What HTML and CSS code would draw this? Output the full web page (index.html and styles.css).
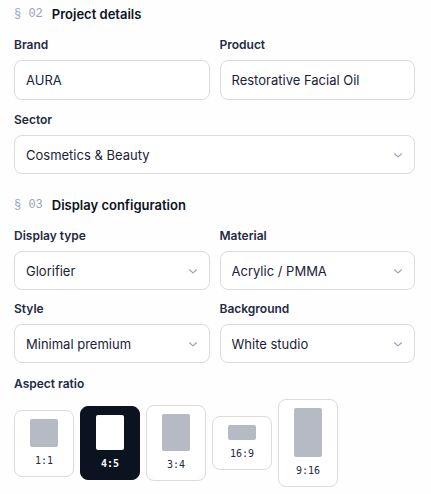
FILE: index.html
```
<!DOCTYPE html>
<html lang="en">
<head>
	<meta charset="utf-8">
	<meta name="viewport" content="width=device-width, initial-scale=1">
	<title>Project details</title>
	<link rel="stylesheet" href="styles.css">
</head>
<body>
	<svg class="defs" aria-hidden="true">
		<symbol id="chevron" viewBox="0 0 10 10">
			<path d="M1.5 3.8 L5 6.9 L8.5 3.8" fill="none" stroke="currentColor" stroke-width="1.2" stroke-linecap="round" stroke-linejoin="round"/>
		</symbol>
	</svg>
	<form class="config-form">
		<section class="section">
			<h2 class="section-title"><span class="section-num">§ 02</span>Project details</h2>
			<div class="fields project-fields">
				<div class="field">
					<label for="brand">Brand</label>
					<input type="text" id="brand" value="AURA">
				</div>
				<div class="field">
					<label for="product">Product</label>
					<input type="text" id="product" value="Restorative Facial Oil">
				</div>
				<div class="field wide">
					<label for="sector">Sector</label>
					<div class="select-wrap">
						<select id="sector">
							<option>Cosmetics &amp; Beauty</option>
						</select>
						<svg class="chevron"><use href="#chevron"/></svg>
					</div>
				</div>
			</div>
		</section>

		<section class="section">
			<h2 class="section-title"><span class="section-num">§ 03</span>Display configuration</h2>
			<div class="fields">
				<div class="field">
					<label for="display-type">Display type</label>
					<div class="select-wrap">
						<select id="display-type">
							<option>Glorifier</option>
						</select>
						<svg class="chevron"><use href="#chevron"/></svg>
					</div>
				</div>
				<div class="field">
					<label for="material">Material</label>
					<div class="select-wrap">
						<select id="material">
							<option>Acrylic / PMMA</option>
						</select>
						<svg class="chevron"><use href="#chevron"/></svg>
					</div>
				</div>
				<div class="field">
					<label for="style">Style</label>
					<div class="select-wrap">
						<select id="style">
							<option>Minimal premium</option>
						</select>
						<svg class="chevron"><use href="#chevron"/></svg>
					</div>
				</div>
				<div class="field">
					<label for="background">Background</label>
					<div class="select-wrap">
						<select id="background">
							<option>White studio</option>
						</select>
						<svg class="chevron"><use href="#chevron"/></svg>
					</div>
				</div>
			</div>
			<div class="field ratio-field" role="radiogroup" aria-labelledby="ratio-label">
				<span class="field-label" id="ratio-label">Aspect ratio</span>
				<div class="ratios">
					<label class="ratio">
						<input type="radio" name="ratio" value="1:1">
						<span class="shape square"></span>
						<span>1:1</span>
					</label>
					<label class="ratio">
						<input type="radio" name="ratio" value="4:5" checked>
						<span class="shape portrait"></span>
						<span>4:5</span>
					</label>
					<label class="ratio">
						<input type="radio" name="ratio" value="3:4">
						<span class="shape classic"></span>
						<span>3:4</span>
					</label>
					<label class="ratio">
						<input type="radio" name="ratio" value="16:9">
						<span class="shape landscape"></span>
						<span>16:9</span>
					</label>
					<label class="ratio">
						<input type="radio" name="ratio" value="9:16">
						<span class="shape story"></span>
						<span>9:16</span>
					</label>
				</div>
			</div>
		</section>
	</form>
</body>
</html>
```
FILE: styles.css
```
*{
	box-sizing: border-box;
}
body{
	margin: 0;
	background-color: #fefefe;
	color: #0b1320;
	font-family: Inter, "Liberation Sans", sans-serif;
}
.defs{
	display: none;
}
.config-form{
	display: flex;
	flex-direction: column;
	gap: 21px;
	padding: 4px 16px 6px 14px;
}
.section-title{
	display: flex;
	align-items: center;
	gap: 9px;
	margin: 0 0 12px;
	font-size: 13px;
	font-weight: 600;
	line-height: 20px;
}
.section-num{
	color: #9aa1b5;
	font-family: "Liberation Mono", monospace;
	font-size: 12px;
	font-weight: 400;
}
.fields{
	display: grid;
	grid-template-columns: 1fr 1fr;
	gap: 10px;
}
.project-fields{
	row-gap: 11px;
}
.wide{
	grid-column: 1 / -1;
}
.field{
	display: flex;
	flex-direction: column;
	gap: 6px;
	min-width: 0;
}
.field > label,
.field-label{
	color: #1f2a44;
	font-size: 12px;
	font-weight: 600;
	line-height: 18px;
}
input[type="text"],
select{
	width: 100%;
	height: 40px;
	padding: 0 11px;
	border: 1px solid #dcdcde;
	border-radius: 8px;
	outline: none;
	background-color: white;
	color: #1a2233;
	font-family: inherit;
	font-size: 13px;
}
select{
	height: 39px;
	padding-right: 30px;
	appearance: none;
}
/* select and its arrow share one grid cell */
.select-wrap{
	display: grid;
	align-items: center;
}
.select-wrap > *{
	grid-area: 1 / 1;
}
.chevron{
	justify-self: end;
	width: 10px;
	height: 10px;
	margin-right: 12px;
	color: #9aa1b5;
	pointer-events: none;
}
.ratio-field{
	margin-top: 12px;
}
.ratios{
	display: flex;
	align-items: center;
	gap: 6px;
}
.ratio{
	display: flex;
	flex-direction: column;
	align-items: center;
	gap: 6px;
	width: 60px;
	padding: 8px;
	border: 1px solid #dcdcde;
	border-radius: 8px;
	background-color: white;
	color: #1f2a44;
	font-family: "DejaVu Sans Mono", monospace;
	font-size: 10px;
	line-height: 15px;
	cursor: pointer;
}
.ratio input{
	position: absolute;
	opacity: 0;
	pointer-events: none;
}
.shape{
	width: 28px;
	border-radius: 2px;
	background-color: #b5bac4;
}
.square{
	height: 28px;
}
.portrait{
	height: 35px;
}
.classic{
	height: 37px;
}
.landscape{
	height: 15px;
}
.story{
	height: 49px;
}
.ratio:has(input:checked){
	border-color: #0b1320;
	background-color: #0b1320;
	color: white;
	font-weight: 700;
}
.ratio:has(input:checked) .shape{
	background-color: white;
}
```
